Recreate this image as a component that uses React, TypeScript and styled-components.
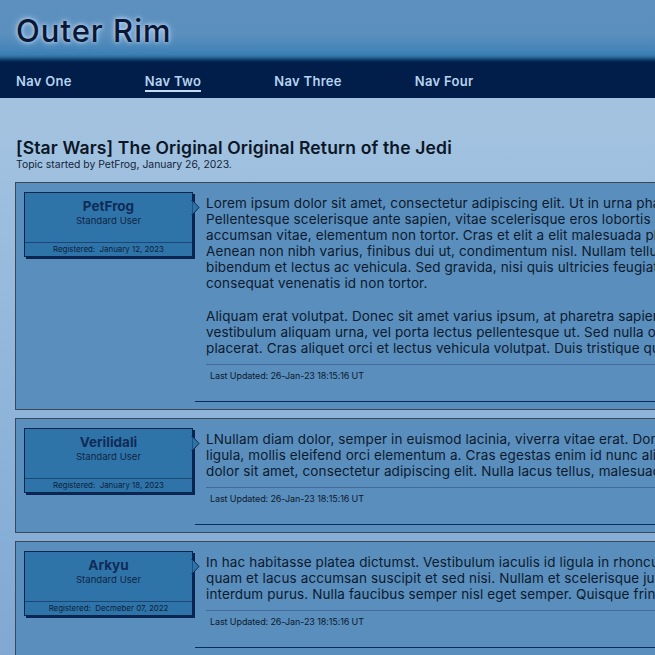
import React from "react";
import styled, { createGlobalStyle } from "styled-components";

const GlobalStyle = createGlobalStyle`
  html, body {
    margin: 0;
    padding: 0;
    overflow: hidden;
  }
  body {
    font-family: Inter, "Open Sans", sans-serif;
    color: #0d1b2e;
    background: #a3c3e1;
  }
`;

const Page = styled.div`
  width: 100%;
  min-height: 655px;
  display: flex;
  flex-direction: column;
  background: linear-gradient(to bottom, #a5c4e2 0%, #a2c2e0 20%, #8fb5da 60%, #80a8d2 100%);
`;

const Header = styled.header`
  height: 62px;
  padding: 0 16px;
  display: flex;
  align-items: flex-start;
  background: linear-gradient(
    to bottom,
    #5d90bf 0%,
    #5b8fbe 55%,
    #4585b8 80%,
    #3a7fb2 88%,
    #2a6a9c 92%,
    #0e3562 97%,
    #032452 100%
  );
`;

const SiteTitle = styled.h1`
  margin: 14px 0 0;
  font-family: Inter, sans-serif;
  font-weight: 500;
  font-size: 31px;
  line-height: 34px;
  letter-spacing: 1px;
  color: #0a1735;
  text-shadow: 0 0 4px rgba(220, 236, 255, 0.9), 0 0 8px rgba(200, 225, 250, 0.6);
`;

const Nav = styled.nav`
  height: 36px;
  background: #011d49;
  display: flex;
  align-items: center;
  gap: 73px;
  padding: 0 16px;
`;

const NavLink = styled.a<{ $active?: boolean }>`
  font-size: 13px;
  font-weight: 600;
  letter-spacing: 0.3px;
  color: #b7d3ef;
  text-decoration: none;
  line-height: 16px;
  padding-top: 4px;
  padding-bottom: 1px;
  border-bottom: 2px solid ${(p) => (p.$active ? "#c4dbf2" : "transparent")};
`;

const Main = styled.main`
  min-width: 1000px;
  padding: 40px 0 0 15px;
  display: flex;
  flex-direction: column;
`;

const TopicTitle = styled.h2`
  margin: 0 0 0 1px;
  font-size: 17.5px;
  line-height: 20px;
  font-weight: 600;
  letter-spacing: 0.15px;
  color: #0b1626;
`;

const TopicMeta = styled.div`
  margin: 0 0 11px 1px;
  font-size: 10.4px;
  line-height: 13px;
  color: #13243a;
`;

const PostList = styled.div`
  display: flex;
  flex-direction: column;
  gap: 8px;
`;

const Post = styled.article`
  display: flex;
  align-items: flex-start;
  background: #5a8ebd;
  border: 1px solid #3a4858;
  padding: 9px 0 7px 8px;
`;

const UserCard = styled.div`
  position: relative;
  flex: 0 0 167px;
  display: flex;
  flex-direction: column;
  background: #2f74a8;
  border: 1px solid #0a2550;
  box-shadow: 2px 2px 0 #0a2550;
  text-align: center;
`;

const UserInfo = styled.div`
  height: 49px;
  padding-top: 5px;
  box-sizing: border-box;
`;

const UserName = styled.div`
  font-size: 13.5px;
  line-height: 16px;
  font-weight: 700;
  color: #0f2b58;
`;

const UserRole = styled.div`
  font-size: 9.6px;
  line-height: 13px;
  color: #0f2546;
`;

const UserFooter = styled.div`
  border-top: 1px solid #1b4676;
  font-size: 7.9px;
  line-height: 13px;
  color: #0b1f3e;
`;

const Pointer = styled.svg`
  position: absolute;
  right: -9px;
  top: 7px;
  width: 9px;
  height: 16px;
  overflow: visible;
`;

const PostBody = styled.div`
  flex: 1;
  margin-left: 2px;
  padding: 3px 0 0 11px;
  border-bottom: 1.5px solid #0a2a5c;
`;

const PostText = styled.div`
  margin-bottom: 8px;
  p {
    margin: 0;
    font-size: 13.5px;
    line-height: 16px;
    letter-spacing: 0.12px;
    white-space: pre;
    color: #0c1a2d;
  }
  p + p {
    margin-top: 17px;
  }
`;

const PostFooter = styled.div`
  border-top: 1px solid #45699a;
  padding: 5px 0 20px 4px;
  font-size: 9px;
  line-height: 11px;
  letter-spacing: -0.1px;
  color: #0c1a2d;
`;

type PostData = {
  user: string;
  registered: string;
  paragraphs: string[];
};

const posts: PostData[] = [
  {
    user: "PetFrog",
    registered: "January 12, 2023",
    paragraphs: [
      "Lorem ipsum dolor sit amet, consectetur adipiscing elit. Ut in urna pharetra, ultrices erat at, faucibus\nPellentesque scelerisque ante sapien, vitae scelerisque eros lobortis nec. Phasellus sit amet ligula\naccumsan vitae, elementum non tortor. Cras et elit a elit malesuada placerat nec et ipsum. Mauris\nAenean non nibh varius, finibus dui ut, condimentum nisl. Nullam tellus lorem, porttitor sed\nbibendum et lectus ac vehicula. Sed gravida, nisi quis ultricies feugiat, lorem lectus maximus\nconsequat venenatis id non tortor.",
      "Aliquam erat volutpat. Donec sit amet varius ipsum, at pharetra sapien. Integer vitae justo\nvestibulum aliquam urna, vel porta lectus pellentesque ut. Sed nulla odio, ultrices quis\nplacerat. Cras aliquet orci et lectus vehicula volutpat. Duis tristique quis lorem id feugiat.",
    ],
  },
  {
    user: "Verilidali",
    registered: "January 18, 2023",
    paragraphs: [
      "LNullam diam dolor, semper in euismod lacinia, viverra vitae erat. Donec ut nisi sit amet\nligula, mollis eleifend orci elementum a. Cras egestas enim id nunc aliquam, vitae lorem\ndolor sit amet, consectetur adipiscing elit. Nulla lacus tellus, malesuada vel lorem et.",
    ],
  },
  {
    user: "Arkyu",
    registered: "Decmeber 07, 2022",
    paragraphs: [
      "In hac habitasse platea dictumst. Vestibulum iaculis id ligula in rhoncus. Aliquam erat\nquam et lacus accumsan suscipit et sed nisi. Nullam et scelerisque justo, vitae porta\ninterdum purus. Nulla faucibus semper nisl eget semper. Quisque fringilla metus in.",
    ],
  },
];

function PostItem({ post }: { post: PostData }) {
  return (
    <Post>
      <UserCard>
        <UserInfo>
          <UserName>{post.user}</UserName>
          <UserRole>Standard User</UserRole>
        </UserInfo>
        <UserFooter>Registered:&nbsp; {post.registered}</UserFooter>
        <Pointer viewBox="0 0 9 16">
          <polygon points="0,0 7,7.5 0,15" fill="#2f74a8" stroke="#0a2550" strokeWidth="1" />
          <rect x="-1.5" y="0.8" width="1.6" height="13.4" fill="#2f74a8" />
        </Pointer>
      </UserCard>
      <PostBody>
        <PostText>
          {post.paragraphs.map((p, i) => (
            <p key={i}>{p}</p>
          ))}
        </PostText>
        <PostFooter>Last Updated: 26-Jan-23 18:15:16 UT</PostFooter>
      </PostBody>
    </Post>
  );
}

export default function App() {
  return (
    <>
      <GlobalStyle />
      <Page>
        <Header>
          <SiteTitle>Outer Rim</SiteTitle>
        </Header>
        <Nav>
          <NavLink>Nav One</NavLink>
          <NavLink $active>Nav Two</NavLink>
          <NavLink>Nav Three</NavLink>
          <NavLink>Nav Four</NavLink>
        </Nav>
        <Main>
          <TopicTitle>[Star Wars] The Original Original Return of the Jedi</TopicTitle>
          <TopicMeta>Topic started by PetFrog, January 26, 2023.</TopicMeta>
          <PostList>
            {posts.map((p) => (
              <PostItem key={p.user} post={p} />
            ))}
          </PostList>
        </Main>
      </Page>
    </>
  );
}
